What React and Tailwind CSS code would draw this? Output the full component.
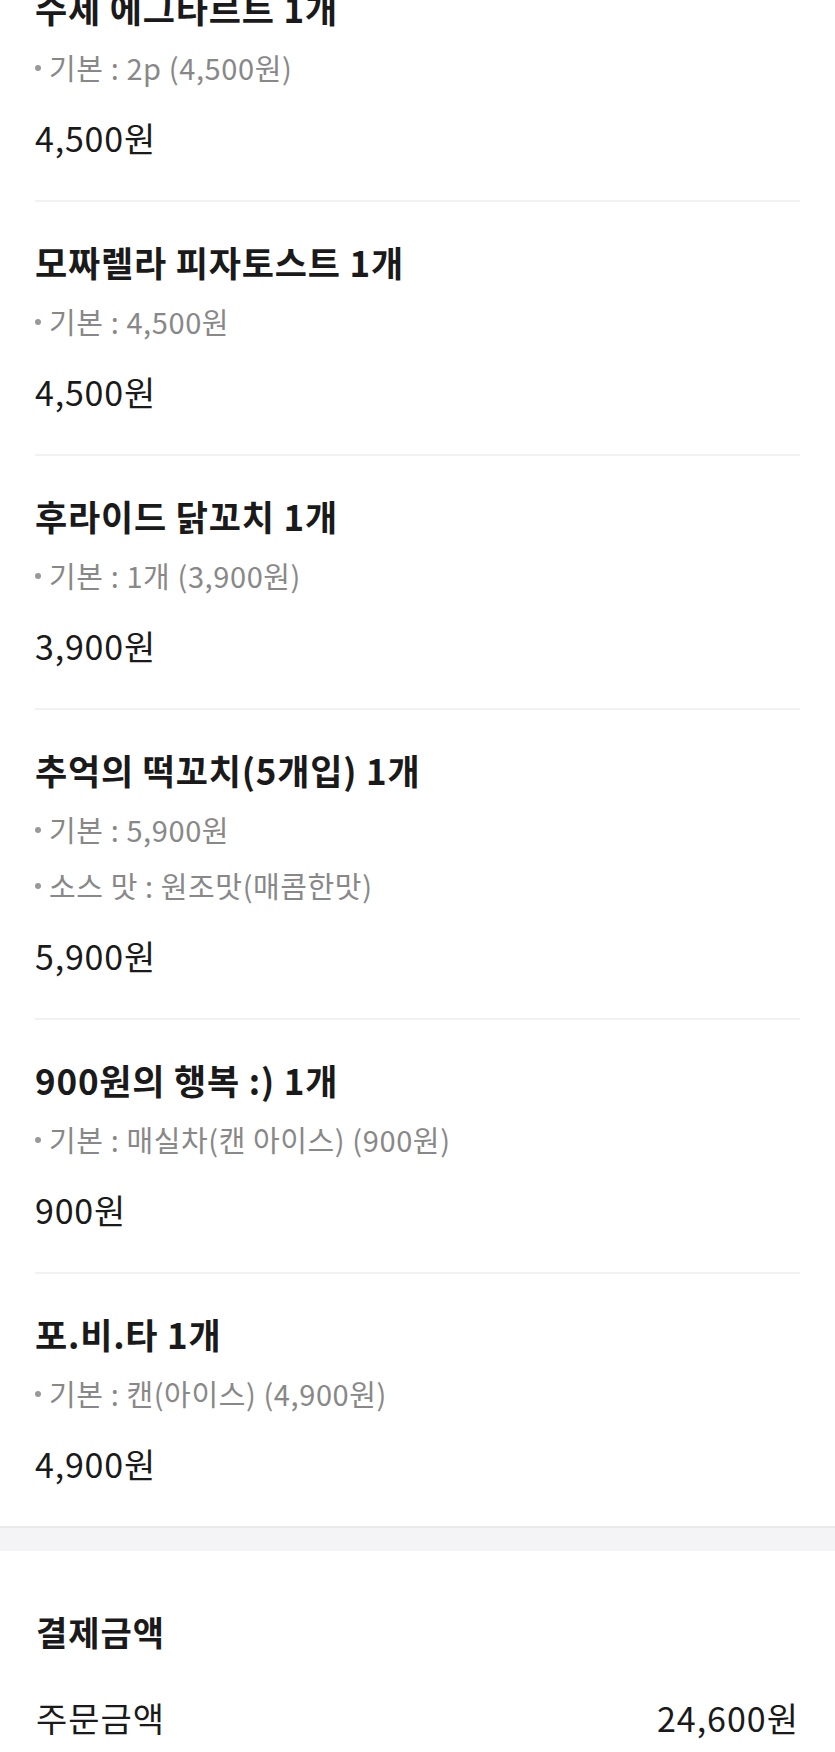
import React from "react";

const items = [
  { title: "수제 에그타르트 1개", options: ["기본 : 2p (4,500원)"], price: "4,500원" },
  { title: "모짜렐라 피자토스트 1개", options: ["기본 : 4,500원"], price: "4,500원" },
  { title: "후라이드 닭꼬치 1개", options: ["기본 : 1개 (3,900원)"], price: "3,900원" },
  { title: "추억의 떡꼬치(5개입) 1개", options: ["기본 : 5,900원", "소스 맛 : 원조맛(매콤한맛)"], price: "5,900원" },
  { title: "900원의 행복 :) 1개", options: ["기본 : 매실차(캔 아이스) (900원)"], price: "900원" },
  { title: "포.비.타 1개", options: ["기본 : 캔(아이스) (4,900원)"], price: "4,900원" },
];

export default function App() {
  return (
    <div
      className="w-[835px] h-[1752px] overflow-hidden bg-white flex flex-col"
      style={{ fontFamily: '"Noto Sans CJK KR", "Noto Sans", sans-serif' }}
    >
      <div className="flex flex-col px-[35px] mt-[-52px]">
        {items.map((it, i) => (
          <div
            key={i}
            className={`flex flex-col pt-[38px] pb-[40px] ${i < items.length - 1 ? "border-b-2 border-[#f2f2f2]" : ""}`}
          >
            <div className="text-[35px] leading-[44px] font-bold text-[#1a1a1a] tracking-[0.8px] whitespace-nowrap">{it.title}</div>
            <div className="flex flex-col mt-[10px]">
              {it.options.map((o, j) => (
                <div key={j} className="flex items-center h-[56px] text-[29px] text-[#888888] tracking-[0.6px] whitespace-nowrap">
                  <span className="w-[6px] h-[6px] rounded-full bg-[#999999] mr-[8px] shrink-0" />
                  <span>{o}</span>
                </div>
              ))}
            </div>
            <div className="mt-[20px] text-[34px] leading-[44px] text-[#1a1a1a] tracking-[0.8px]">{it.price}</div>
          </div>
        ))}
      </div>
      <div className="h-[2px] bg-[#e9e9eb]" />
      <div className="h-[23px] bg-[#f4f4f6]" />
      <div className="flex flex-col px-[36px] pt-[59px]">
        <div className="text-[34px] leading-[44px] font-bold text-[#1a1a1a] tracking-[1px]">결제금액</div>
        <div className="flex justify-between items-center mt-[42px] text-[34px] leading-[44px] text-[#1a1a1a] tracking-[1px]">
          <span>주문금액</span>
          <span>24,600원</span>
        </div>
      </div>
    </div>
  );
}
